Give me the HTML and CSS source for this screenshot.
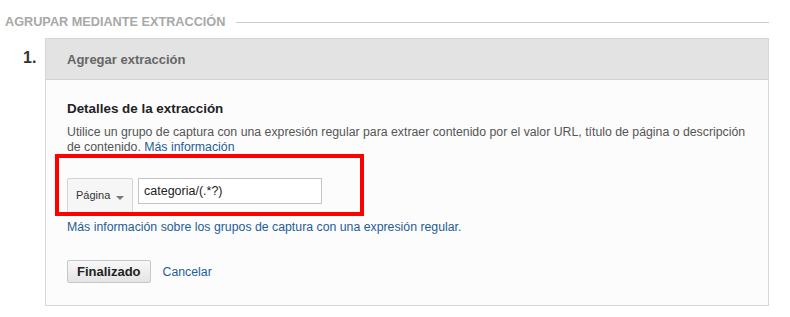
FILE: index.html
```html
<!DOCTYPE html>
<html lang="es">

<head>
  <meta charset="UTF-8" />
  <title>Agrupar mediante extracción</title>
  <link rel="stylesheet" href="styles.css">
</head>

<body>
  <div class="section-title">
    <span>AGRUPAR MEDIANTE EXTRACCIÓN</span>
    <div class="rule"></div>
  </div>

  <div class="step">
    <div class="step-num">1.</div>
    <div class="panel">
      <div class="panel-head">Agregar extracción</div>
      <div class="panel-body">
        <h3>Detalles de la extracción</h3>
        <p class="desc">Utilice un grupo de captura con una expresión regular para extraer contenido por el valor URL, título de página o descripción de contenido. <a href="#">Más información</a></p>

        <div class="field-row">
          <div class="select-btn">Página <span class="caret"></span></div>
          <input type="text" class="regex" value="categoria/(.*?)" />
          <div class="highlight"></div>
        </div>

        <a href="#" class="help">Más información sobre los grupos de captura con una expresión regular.</a>

        <div class="actions">
          <button>Finalizado</button>
          <a href="#">Cancelar</a>
        </div>
      </div>
    </div>
  </div>
</body>

</html>
```

FILE: styles.css
```css
body {
  margin: 0;
  font-family: 'Liberation Sans', Arial, sans-serif;
  background-color: #fff;
  color: #333;
}

a {
  color: #1f5c99;
  text-decoration: none;
}

/* título de sección */
.section-title {
  display: flex;
  align-items: center;
  gap: 11px;
  padding: 13px 21px 0 5px;
  height: 17px;
}

.section-title span {
  font-size: 12.7px;
  font-weight: bold;
  color: #a8a8a8;
  white-space: nowrap;
}

.section-title .rule {
  flex: 1;
  border-top: 1px solid #cccccc;
  margin-top: 2px;
}

/* paso */
.step {
  display: flex;
  margin-top: 8px;
}

.step-num {
  width: 45px;
  box-sizing: border-box;
  padding: 11px 0 0 23px;
  font-size: 16px;
  font-weight: bold;
  color: #333;
}

.panel {
  width: 724px;
  border: 1px solid #d6d6d6;
  background-color: #fcfcfc;
  box-sizing: border-box;
}

.panel-head {
  height: 40px;
  line-height: 41px;
  background-color: #e3e3e3;
  border-bottom: 1px solid #d2d2d2;
  padding-left: 21px;
  font-size: 13px;
  font-weight: bold;
  color: #666;
}

.panel-body {
  padding: 21px 18px 22px 21px;
}

.panel-body h3 {
  margin: 0;
  font-size: 13.4px;
  line-height: 16px;
  color: #222;
}

.desc {
  margin: 8px 0 0;
  font-size: 12.3px;
  line-height: 15px;
  color: #555;
}

/* fila de campos */
.field-row {
  position: relative;
  display: flex;
  align-items: flex-start;
  gap: 5px;
  margin-top: 23px;
}

.select-btn {
  width: 66px;
  height: 35px;
  box-sizing: border-box;
  border: 1px solid #d4d4d4;
  border-radius: 2px;
  background-color: #f6f6f6;
  font-size: 11px;
  color: #333;
  padding: 0 0 0 8px;
  line-height: 32px;
  position: relative;
}

.caret {
  position: absolute;
  right: 8px;
  top: 17px;
  width: 0;
  height: 0;
  border-left: 4px solid transparent;
  border-right: 4px solid transparent;
  border-top: 4px solid #777;
}

.regex {
  width: 184px;
  height: 26px;
  box-sizing: border-box;
  margin: 0;
  border: 1px solid #c4c4c4;
  background-color: #fff;
  font-family: 'Liberation Sans', Arial, sans-serif;
  font-size: 12.5px;
  color: #222;
  padding: 0 5px;
}

/* marco rojo de anotación */
.highlight {
  position: absolute;
  left: -12px;
  top: -24px;
  width: 309px;
  height: 62px;
  box-sizing: border-box;
  border: 4px solid #ff0000;
  pointer-events: none;
}

.help {
  display: block;
  margin-top: 7px;
  font-size: 12.3px;
  line-height: 15px;
}

.actions {
  display: flex;
  align-items: center;
  gap: 12px;
  margin-top: 25px;
}

.actions button {
  height: 23px;
  padding: 0 9px;
  font-family: 'Liberation Sans', Arial, sans-serif;
  font-size: 13px;
  font-weight: bold;
  color: #222;
  border: 1px solid #c6c6c6;
  border-radius: 2px;
  background: linear-gradient(#f8f8f8, #e4e4e4);
}

.actions a {
  font-size: 12.3px;
}
```
